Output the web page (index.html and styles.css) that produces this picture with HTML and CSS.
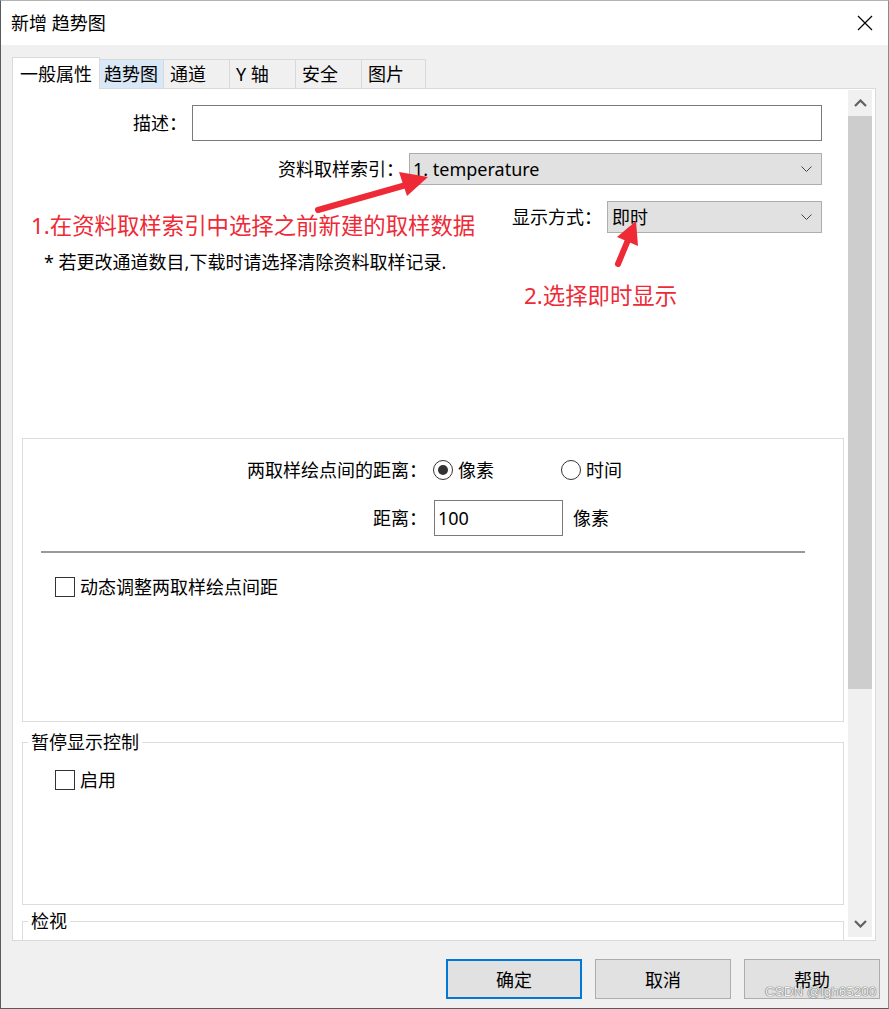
FILE: index.html
```html
<!DOCTYPE html>
<html lang="zh-CN">
<head>
  <meta charset="UTF-8">
  <title>新增 趋势图</title>
  <link rel="stylesheet" href="styles.css">
</head>
<body>
  <div class="window">
    <div class="titlebar">
      <span class="title">新增 趋势图</span>
      <svg class="close" width="16" height="16" viewBox="0 0 16 16">
        <path d="M1 1 L15 15 M15 1 L1 15" stroke="#000" stroke-width="1.2" fill="none"/>
      </svg>
    </div>

    <div class="body">
      <div class="tabs">
        <div class="tab active">一般属性</div>
        <div class="tab hover">趋势图</div>
        <div class="tab w67">通道</div>
        <div class="tab w67">Y 轴</div>
        <div class="tab w67">安全</div>
        <div class="tab">图片</div>
      </div>

      <div class="panel">
        <div class="content">
          <div class="form-row desc-row">
            <span class="label">描述：</span>
            <div class="input desc-input"></div>
          </div>
          <div class="form-row sample-row">
            <span class="label">资料取样索引：</span>
            <div class="select sample-select">
              <span>1. temperature</span>
              <svg width="11" height="7" viewBox="0 0 11 7"><polyline points="0.5,0.5 5.5,5.5 10.5,0.5" stroke="#444" stroke-width="1" fill="none"/></svg>
            </div>
          </div>
          <div class="form-row mode-row">
            <span class="label">显示方式：</span>
            <div class="select mode-select">
              <span>即时</span>
              <svg width="11" height="7" viewBox="0 0 11 7"><polyline points="0.5,0.5 5.5,5.5 10.5,0.5" stroke="#444" stroke-width="1" fill="none"/></svg>
            </div>
          </div>
          <div class="note">* 若更改通道数目,下载时请选择清除资料取样记录.</div>

          <div class="group group-dist">
            <div class="g-row first">
              <span class="g-label">两取样绘点间的距离：</span>
              <div class="radio-opt opt-wide">
                <span class="radio"><span class="dot"></span></span>
                <span>像素</span>
              </div>
              <div class="radio-opt">
                <span class="radio"></span>
                <span>时间</span>
              </div>
            </div>
            <div class="g-row second">
              <span class="g-label">距离：</span>
              <div class="input dist-input">100</div>
              <span class="unit">像素</span>
            </div>
            <div class="separator"></div>
            <div class="check-row dyn">
              <span class="checkbox"></span>
              <span>动态调整两取样绘点间距</span>
            </div>
          </div>

          <fieldset class="group pause">
            <legend>暂停显示控制</legend>
            <div class="check-row">
              <span class="checkbox"></span>
              <span>启用</span>
            </div>
          </fieldset>

          <fieldset class="group view">
            <legend>检视</legend>
          </fieldset>
        </div>

        <div class="scrollbar">
          <div class="sb-btn">
            <svg width="13" height="8" viewBox="0 0 13 8"><polyline points="1,7 6.5,1.5 12,7" stroke="#606060" stroke-width="2.2" fill="none"/></svg>
          </div>
          <div class="sb-thumb"></div>
          <div class="sb-track"></div>
          <div class="sb-btn">
            <svg width="13" height="8" viewBox="0 0 13 8"><polyline points="1,1 6.5,6.5 12,1" stroke="#606060" stroke-width="2.2" fill="none"/></svg>
          </div>
        </div>
      </div>
    </div>

    <div class="footer">
      <button class="btn primary">确定</button>
      <button class="btn">取消</button>
      <button class="btn">帮助</button>
    </div>

    <!-- annotations drawn over the dialog -->
    <div class="annot">
      <span class="mark mark-1">1.在资料取样索引中选择之前新建的取样数据</span>
      <span class="mark mark-2">2.选择即时显示</span>
      <svg class="arrows" width="889" height="1009" viewBox="0 0 889 1009">
        <line x1="318" y1="210" x2="406" y2="185" stroke="#ee2a36" stroke-width="6" stroke-linecap="round"/>
        <polygon points="428,177 407,196 399,172" fill="#ee2a36"/>
        <line x1="618" y1="264" x2="628" y2="240" stroke="#ee2a36" stroke-width="6" stroke-linecap="round"/>
        <polygon points="636,221 638,246 617,237" fill="#ee2a36"/>
      </svg>
    </div>

    <div class="watermark">CSDN @lgh65200</div>
  </div>
</body>
</html>
```

FILE: styles.css
```css
* {
  box-sizing: border-box;
}

body {
  margin: 0;
  font-family: "Noto Sans", "Noto Sans CJK SC", sans-serif;
  font-size: 18px;
  line-height: 24px;
  color: #000;
  background: #f0f0f0;
}

.window {
  position: relative;
  width: 889px;
  height: 1009px;
  border-top: 1px solid #b4b4b4;
  border-left: 1px solid #5a5a5a;
  border-right: 1px solid #8a8a8a;
  border-bottom: 1px solid #5a5a5a;
  background: #f0f0f0;
  overflow: hidden;
}

.titlebar {
  height: 44px;
  background: #fff;
  display: flex;
  align-items: center;
  justify-content: space-between;
  padding: 0 15px 0 10px;
}

.body {
  padding: 0 12px 0 11px;
}

/* tabs */
.tabs {
  height: 43px;
  display: flex;
  align-items: flex-end;
}

.tab {
  width: 65px;
  height: 29px;
  margin-right: -1px;
  padding-left: 6px;
  border: 1px solid #d9d9d9;
  border-bottom: none;
  background: #f0f0f0;
  display: flex;
  align-items: center;
}
.tab.w67 {
  width: 67px;
}
.tab.hover {
  background: #d8e8f6;
  padding-left: 4px;
}
.tab.active {
  width: 88px;
  height: 32px;
  margin-bottom: -1px;
  padding-left: 7px;
  background: #fff;
  position: relative;
  z-index: 2;
}

/* tab page */
.panel {
  position: relative;
  z-index: 1;
  height: 853px;
  border: 1px solid #d9d9d9;
  background: #fff;
  display: flex;
}

.content {
  position: relative;
  width: 835px;
  overflow: hidden;
}

.form-row {
  display: flex;
  justify-content: flex-end;
  align-items: center;
  padding-right: 26px;
}
.form-row .label {
  margin-right: 5px;
}
.desc-row {
  margin-top: 16px;
}
.sample-row {
  margin-top: 12px;
}
.mode-row {
  margin-top: 16px;
}

.input {
  border: 1px solid #7a7a7a;
  background: #fff;
  padding-left: 3px;
  display: flex;
  align-items: center;
}
.desc-input {
  width: 630px;
  height: 36px;
}

.select {
  background: #e1e1e1;
  border: 1px solid #adadad;
  display: flex;
  align-items: center;
  justify-content: space-between;
  padding: 0 9px 0 3px;
  height: 32px;
}
.sample-select {
  width: 413px;
}
.mode-select {
  width: 215px;
  padding-left: 4px;
}

.note {
  margin-top: 17px;
  padding-left: 31px;
}

/* group boxes */
.group {
  margin: 0 0 0 9px;
  width: 822px;
  border: 1px solid #dcdcdc;
  min-inline-size: 0;
}

.group-dist {
  margin-top: 164px;
  height: 284px;
  padding-top: 19px;
}

.g-row {
  display: flex;
  align-items: center;
}
.g-row.second {
  margin-top: 18px;
}
.g-label {
  width: 404px;
  text-align: right;
}

.radio-opt {
  display: flex;
  align-items: center;
  gap: 5px;
}
.opt-wide {
  width: 128px;
  margin-left: 6px;
}
.radio {
  width: 20px;
  height: 20px;
  border: 1px solid #333;
  border-radius: 50%;
  display: flex;
  align-items: center;
  justify-content: center;
}
.radio .dot {
  width: 10px;
  height: 10px;
  border-radius: 50%;
  background: #333;
}

.dist-input {
  width: 129px;
  height: 36px;
  margin-left: 7px;
}
.unit {
  margin-left: 10px;
}

.separator {
  margin: 15px 0 0 18px;
  width: 764px;
  height: 2px;
  background: #9a9a9a;
}

.check-row {
  display: flex;
  align-items: center;
  gap: 5px;
  padding-left: 32px;
}
.check-row.dyn {
  margin-top: 22px;
}
.checkbox {
  width: 20px;
  height: 20px;
  border: 1px solid #333;
  background: #fff;
}

fieldset.group {
  padding: 0 0 0 5px;
}
fieldset.group legend {
  padding: 0 3px;
  line-height: 22px;
}
fieldset.group .check-row {
  margin-top: 15px;
  padding-left: 27px;
}
.pause {
  margin-top: 9px;
  height: 174px;
}
.view {
  margin-top: 5px;
  height: 120px;
}

/* scrollbar */
.scrollbar {
  width: 24px;
  margin: 1px 2px 3px 0;
  background: #f0f0f0;
  display: flex;
  flex-direction: column;
}
.sb-btn {
  height: 26px;
  display: flex;
  align-items: center;
  justify-content: center;
}
.sb-thumb {
  height: 573px;
  background: #cdcdcd;
}
.sb-track {
  flex: 1;
}

/* dialog buttons */
.footer {
  display: flex;
  justify-content: flex-end;
  gap: 13px;
  padding: 18px 8px 0 0;
}
.btn {
  width: 136px;
  height: 40px;
  background: #e1e1e1;
  border: 1px solid #adadad;
  font-family: "Noto Sans", "Noto Sans CJK SC", sans-serif;
  font-size: 18px;
  color: #000;
  padding: 0;
}
.btn.primary {
  border: 2px solid #0078d7;
}

/* annotations */
.annot {
  position: absolute;
  inset: 0;
  z-index: 5;
  pointer-events: none;
}
.mark {
  position: absolute;
  color: #ee2a36;
  font-size: 22.4px;
  line-height: 30px;
  white-space: nowrap;
}
.mark-1 {
  left: 30px;
  top: 210px;
}
.mark-2 {
  left: 523px;
  top: 280px;
}
.arrows {
  position: absolute;
  left: -1px;
  top: -1px;
}

.watermark {
  position: absolute;
  z-index: 5;
  left: 764px;
  top: 983px;
  font-family: "Liberation Sans", Arial, sans-serif;
  font-size: 13.5px;
  line-height: 16px;
  color: #f4f4f4;
  text-shadow: 0 0 1px #555, 0 0 1px #555;
}
```
